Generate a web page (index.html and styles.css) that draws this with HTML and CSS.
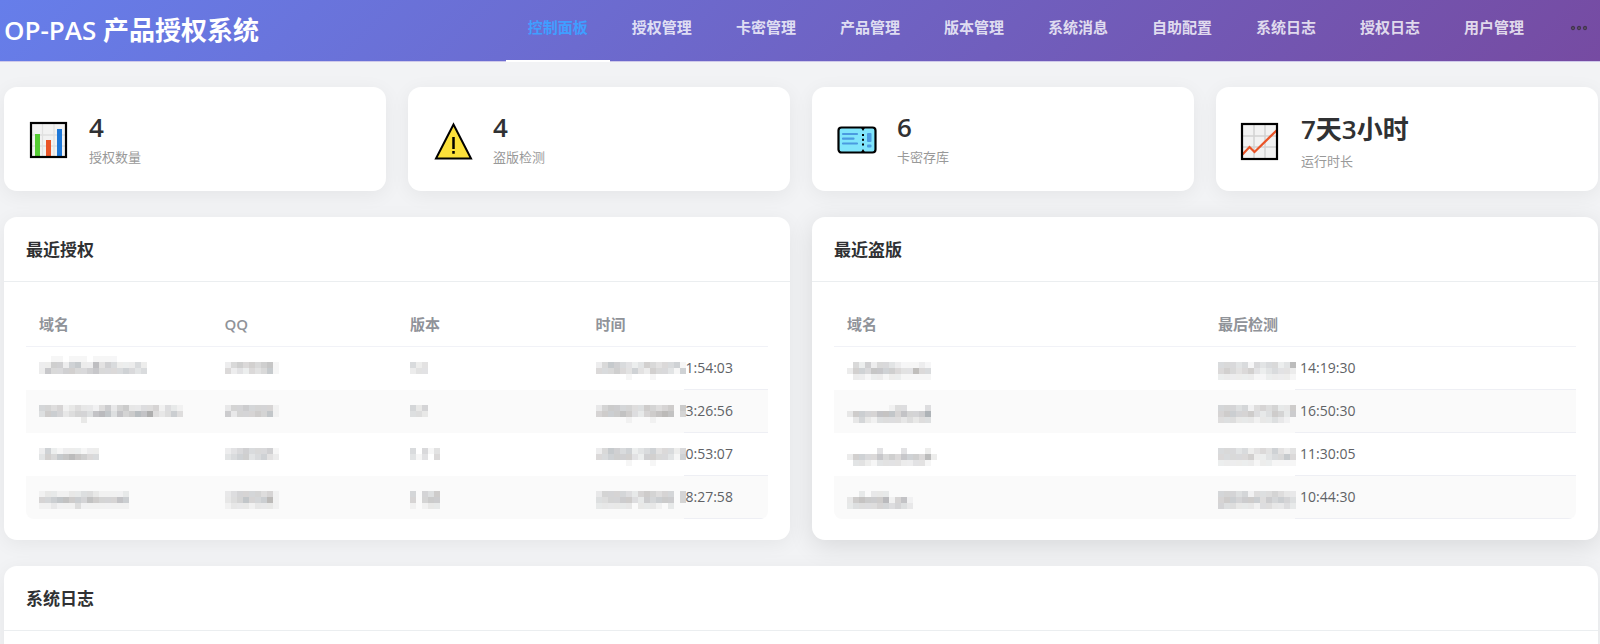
FILE: index.html
```html
<!DOCTYPE html>
<html lang="zh-CN">
<head>
<meta charset="utf-8">
<title>OP-PAS 产品授权系统</title>
<link rel="stylesheet" href="styles.css">
</head>
<body>
<header class="topbar">
  <h1 class="brand">OP-PAS 产品授权系统</h1>
  <nav class="menu">
    <a class="menu-item active" href="#">控制面板</a>
    <a class="menu-item" href="#">授权管理</a>
    <a class="menu-item" href="#">卡密管理</a>
    <a class="menu-item" href="#">产品管理</a>
    <a class="menu-item" href="#">版本管理</a>
    <a class="menu-item" href="#">系统消息</a>
    <a class="menu-item" href="#">自助配置</a>
    <a class="menu-item" href="#">系统日志</a>
    <a class="menu-item" href="#">授权日志</a>
    <a class="menu-item" href="#">用户管理</a>
    <button class="menu-more" type="button" aria-label="更多">
      <svg width="18" height="6" viewBox="0 0 18 6" fill="#6b5a75" stroke="#43354f" stroke-width="1.3"><circle cx="3" cy="3" r="1.5"/><circle cx="9" cy="3" r="1.5"/><circle cx="15" cy="3" r="1.5"/></svg>
    </button>
  </nav>
</header>

<main class="page">
  <section class="stats">
    <article class="card stat">
      <svg class="stat-icon" viewBox="0 0 46 46">
        <rect x="5" y="9" width="35" height="34" fill="#f2f2f2"/>
        <path d="M16.500 9v34M28 9v34M5 21h35M5 32h35" stroke="#e0e0e0" stroke-width="1.300"/>
        <rect x="9" y="20" width="5" height="22" fill="#5c3"/>
        <rect x="20" y="26" width="5" height="16" fill="#ea5427"/>
        <rect x="31" y="15" width="5" height="27" fill="#1e78d8"/>
        <rect x="5" y="9" width="35" height="34" fill="none" stroke="#000" stroke-width="2.200"/>
      </svg>
      <div><div class="stat-value">4</div><div class="stat-label">授权数量</div></div>
    </article>
    <article class="card stat">
      <svg class="stat-icon" viewBox="0 0 46 46">
        <path d="M23.500 10.500 41 44.500H6z" fill="#fbe03a" stroke="#000" stroke-width="2"/>
        <path d="M23.500 23v12M23.500 37v2.700" stroke="#000" stroke-width="2.500"/>
      </svg>
      <div><div class="stat-value">4</div><div class="stat-label">盗版检测</div></div>
    </article>
    <article class="card stat">
      <svg class="stat-icon" viewBox="0 0 46 46">
        <rect x="4.500" y="13.500" width="37" height="25" rx="3" fill="#80e5fb" stroke="#000" stroke-width="2.200"/>
        <path d="M9 20h14M9 24.700h10.500M9 29.500h14" stroke="#4a9be0" stroke-width="2.200" stroke-linecap="round"/>
        <path d="M26.500 13h5l-2.500 4zM26.500 39h5l-2.500-4z"/>
        <path d="M29 20v14" stroke="#000" stroke-width="2" stroke-dasharray="2 2.700"/>
        <rect x="33" y="19" width="4.500" height="9" rx="1" fill="#4a9be0"/><rect x="33" y="30.500" width="4.500" height="3" rx="1" fill="#4a9be0"/>
      </svg>
      <div><div class="stat-value">6</div><div class="stat-label">卡密存库</div></div>
    </article>
    <article class="card stat tall">
      <svg class="stat-icon" viewBox="0 0 46 46">
        <rect x="4" y="8" width="35" height="35" fill="#f2f2f2"/>
        <path d="M16 8v35M27 8v35M4 20h35M4 31h35" stroke="#d2d2d2" stroke-width="1.500"/>
        <path d="M4.500 38.500 11.500 31l5 5L39 14" fill="none" stroke="#ea5427" stroke-width="2.200"/>
        <rect x="4" y="8" width="35" height="35" fill="none" stroke="#000" stroke-width="2.200"/>
      </svg>
      <div><div class="stat-value">7天3小时</div><div class="stat-label">运行时长</div></div>
    </article>
  </section>

  <section class="panels">
    <article class="card">
      <h2 class="panel-title">最近授权</h2>
      <div class="panel-body">
        <table class="grid licences">
          <thead><tr><th>域名</th><th>QQ</th><th>版本</th><th>时间</th></tr></thead>
          <tbody>
            <tr><td><i data-mask="..11.111.1111.....|225525622735422242|264455445644445434"></i></td><td><i data-mask="|245454561|423243461"></i></td><td><i data-mask="|423|233"></i></td><td><span class="time"><i data-mask="|246543235434451|444543532544315|.....1...1....."></i>1:54:03</span></td></tr>
            <tr><td><i data-mask="|443412322135245223341321|355423443676364576832353|.......2................"></i></td><td><i data-mask="|244544441|524445461"></i></td><td><i data-mask="|424|332"></i></td><td><span class="time"><i data-mask="|245544335434505|455565324567604|.....1...1....."></i>3:26:56</span></td></tr>
            <tr><td><i data-mask="|2521222122|3546676544"></i></td><td><i data-mask="|234544451|345534532"></i></td><td><i data-mask="|4.413|313.4"></i></td><td><span class="time"><i data-mask="|246545234534424|445555325544315|.....1...1....."></i>0:53:07</span></td></tr>
            <tr><td><i data-mask="|122112233211112|445665546544465|112111311111111"></i></td><td><i data-mask="|234444341|234644571|122212221"></i></td><td><i data-mask="|4.435|4.455|1.122"></i></td><td><span class="time"><i data-mask="|244443245434404|334455325455504|222222.2221.2.."></i>8:27:58</span></td></tr>
          </tbody>
        </table>
      </div>
    </article>
    <article class="card raised">
      <h2 class="panel-title">最近盗版</h2>
      <div class="panel-body">
        <table class="grid piracy">
          <thead><tr><th>域名</th><th>最后检测</th></tr></thead>
          <tbody>
            <tr><td><i data-mask="|.4252443211121|25546655433744|.2212212211111"></i></td><td><span class="time gap"><i data-mask="|4443414344237|4543453234332|2222221122221"></i>14:19:30</span></td></tr>
            <tr><td><i data-mask="|.......133...3|25544666464458|.2421333323233"></i></td><td><span class="time gap"><i data-mask="|4443413434225|4554453235425|3332221223210"></i>16:50:30</span></td></tr>
            <tr><td><i data-mask="|.....3...3...2.|255446454655472|.3321333322331."></i></td><td><span class="time gap"><i data-mask="|4443423435323|4444452234464|2222221221111"></i>11:30:05</span></td></tr>
            <tr><td><i data-mask="|..2.222....|25655571461|23333443432"></i></td><td><span class="time gap"><i data-mask="|4443413334322|4554555354543|4332221332232"></i>10:44:30</span></td></tr>
          </tbody>
        </table>
      </div>
    </article>
  </section>

  <section class="card">
    <h2 class="panel-title">系统日志</h2>
    <div class="panel-body"></div>
  </section>
</main>
<script src="app.js"></script>
</body>
</html>
```

FILE: styles.css
```css
* { box-sizing: border-box; }

body {
  margin: 0;
  overflow: hidden;
  background: #f2f3f5;
  color: #303133;
  font-family: "Open Sans", "Noto Sans CJK SC", sans-serif;
  font-size: 14px;
}

.topbar {
  display: flex;
  justify-content: space-between;
  height: 62px;
  background: linear-gradient(135deg, #667eea 0%, #764ba2 100%);
  border-bottom: 1px solid #cfc9ea;
}

.brand {
  margin: 0;
  padding-left: 4px;
  color: #fff;
  font-size: 26px;
  font-weight: 600;
  line-height: 60px;
  white-space: nowrap;
}

.menu { display: flex; height: 62px; }

.menu-item {
  padding: 0 22px;
  border-bottom: 2px solid transparent;
  color: rgba(255, 255, 255, 0.8);
  font-size: 15px;
  font-weight: 600;
  line-height: 55px;
  text-decoration: none;
  white-space: nowrap;
}

.menu-item.active {
  border-bottom-color: #fff;
  color: #409eff;
}

.menu-more {
  display: flex;
  align-items: center;
  justify-content: flex-end;
  width: 54px;
  height: 56px;
  padding: 0 12px;
  border: 0;
  background: none;
}

.page {
  display: flex;
  flex-direction: column;
  gap: 26px;
  padding: 25px 2px 0 4px;
}

.stats {
  display: grid;
  grid-template-columns: repeat(4, 1fr);
  gap: 22px;
}

.panels {
  display: grid;
  grid-template-columns: repeat(2, 1fr);
  gap: 22px;
}

.card {
  background: #fff;
  border-radius: 13px;
  box-shadow: 0 4px 20px rgba(0, 0, 0, 0.06);
}

.raised { box-shadow: 0 6px 26px rgba(0, 0, 0, 0.11); }

.stat {
  display: flex;
  align-items: flex-start;
  gap: 17px;
  padding: 21px 22px;
}

.stat-icon {
  flex: none;
  width: 46px;
  height: 46px;
  margin-top: 6px;
}

.stat-value {
  font-size: 26px;
  font-weight: 600;
  line-height: 38px;
}

.stat-label {
  margin-top: 2px;
  color: #999;
  font-size: 13px;
  line-height: 18px;
}

.tall .stat-value { line-height: 42px; }
.tall .stat-icon { margin-top: 8px; }

.panel-title {
  margin: 0;
  padding: 1px 22px 0;
  border-bottom: 1px solid #ebeef0;
  font-size: 17px;
  font-weight: 600;
  line-height: 63px;
}

.panel-title { padding-top: 2px; line-height: 62px; }

.panel-body { padding: 22px 22px 21px; }

.grid {
  width: 100%;
  border-collapse: separate;
  border-spacing: 0;
  table-layout: fixed;
}

.grid th,
.grid td {
  height: 43px;
  padding: 0 13px 2px;
  text-align: left;
  vertical-align: middle;
}

.grid th {
  padding-bottom: 3px;
  border-bottom: 1px solid #f1f2f7;
  color: #909399;
  font-size: 15px;
  font-weight: 600;
}

.grid td { color: #606266; }

.grid tbody tr:nth-child(even) td { background-color: #fafafa; }

/* the row rule runs only beside the readable part of the time */
.licences td:last-child { --rule-start: 101px; }
.piracy td:last-child { --rule-start: 90px; }
.grid td:last-child {
  background-image: linear-gradient(#eeeff4, #eeeff4);
  background-position: right bottom;
  background-repeat: no-repeat;
  background-size: calc(100% - var(--rule-start)) 1px;
}

.grid tr:last-child td:first-child { border-bottom-left-radius: 8px; }
.grid tr:last-child td:last-child { border-bottom-right-radius: 8px; }

.time {
  display: flex;
  align-items: center;
}

.time.gap { gap: 4px; }

.mask { display: block; flex: none; }
```

FILE: app.js
```js
// Replaces masked values with a mosaic: one digit per 6px tile, higher is darker.
const TILE = 6;
const TINTS = ["#101010", "#10202c", "#1c1410", "#141420"];
const NS = "http://www.w3.org/2000/svg";

document.querySelectorAll("[data-mask]").forEach((el) => {
  const rows = el.dataset.mask.split("|");
  const cols = Math.max(...rows.map((r) => r.length));
  const svg = document.createElementNS(NS, "svg");
  svg.setAttribute("class", "mask");
  svg.setAttribute("width", cols * TILE);
  svg.setAttribute("height", 4 * TILE);
  svg.setAttribute("aria-hidden", "true");
  svg.setAttribute("shape-rendering", "crispEdges");
  rows.forEach((row, y) => {
    [...row].forEach((level, x) => {
      if (!Number(level)) return;
      const tile = document.createElementNS(NS, "rect");
      tile.setAttribute("x", x * TILE);
      tile.setAttribute("y", y * TILE);
      tile.setAttribute("width", TILE);
      tile.setAttribute("height", TILE);
      tile.setAttribute("fill", TINTS[(x * 3 + y * 5 + Number(level)) % TINTS.length]);
      tile.setAttribute("fill-opacity", Number(level) * 0.04);
      svg.append(tile);
    });
  });
  el.replaceWith(svg);
});
```
